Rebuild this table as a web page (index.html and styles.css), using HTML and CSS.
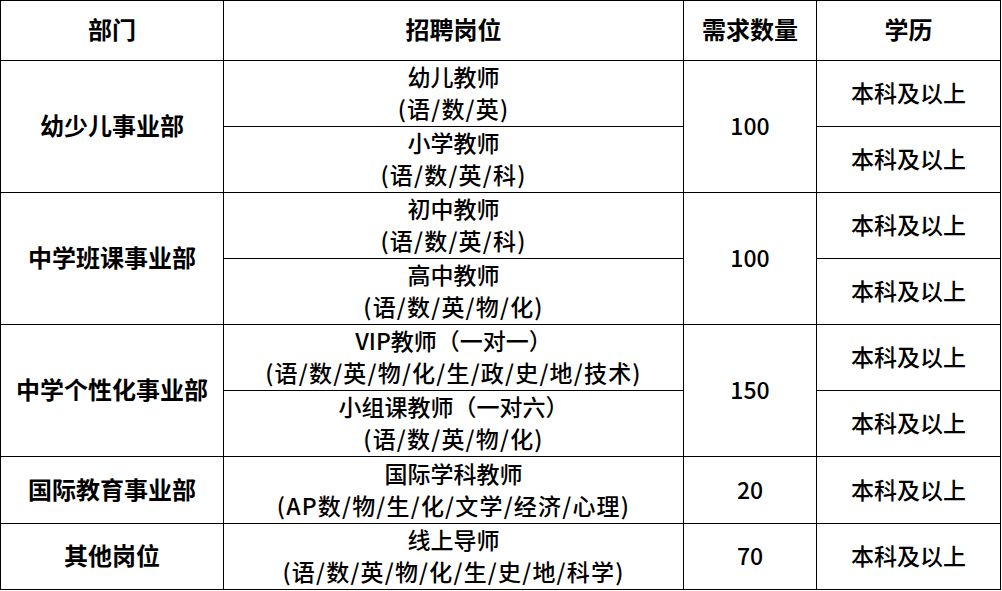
FILE: index.html
```html
<!DOCTYPE html>
<html lang="zh-CN">
<head>
<meta charset="utf-8">
<title>招聘岗位</title>
<link rel="stylesheet" href="styles.css">
</head>
<body>
<div class="table">
  <div class="cell head">部门</div>
  <div class="cell head">招聘岗位</div>
  <div class="cell head">需求数量</div>
  <div class="cell head">学历</div>

  <div class="cell dept span2">幼少儿事业部</div>
  <div class="cell pos"><span>幼儿教师</span><span class="sub">(语/数/英)</span></div>
  <div class="cell num span2">100</div>
  <div class="cell edu">本科及以上</div>
  <div class="cell pos"><span>小学教师</span><span class="sub">(语/数/英/科)</span></div>
  <div class="cell edu">本科及以上</div>

  <div class="cell dept span2">中学班课事业部</div>
  <div class="cell pos"><span>初中教师</span><span class="sub">(语/数/英/科)</span></div>
  <div class="cell num span2">100</div>
  <div class="cell edu">本科及以上</div>
  <div class="cell pos"><span>高中教师</span><span class="sub">(语/数/英/物/化)</span></div>
  <div class="cell edu">本科及以上</div>

  <div class="cell dept span2">中学个性化事业部</div>
  <div class="cell pos"><span>VIP教师（一对一）</span><span class="sub">(语/数/英/物/化/生/政/史/地/技术)</span></div>
  <div class="cell num span2">150</div>
  <div class="cell edu">本科及以上</div>
  <div class="cell pos"><span>小组课教师（一对六）</span><span class="sub">(语/数/英/物/化)</span></div>
  <div class="cell edu">本科及以上</div>

  <div class="cell dept">国际教育事业部</div>
  <div class="cell pos"><span>国际学科教师</span><span class="sub">(AP数/物/生/化/文学/经济/心理)</span></div>
  <div class="cell num">20</div>
  <div class="cell edu">本科及以上</div>

  <div class="cell dept">其他岗位</div>
  <div class="cell pos"><span>线上导师</span><span class="sub">(语/数/英/物/化/生/史/地/科学)</span></div>
  <div class="cell num">70</div>
  <div class="cell edu">本科及以上</div>
</div>
</body>
</html>
```

FILE: styles.css
```css
html, body {
  margin: 0;
  padding: 0;
  background: #ffffff;
}

.table {
  display: grid;
  width: 1001px;
  grid-template-columns: 222px 459px 132px 183px;
  grid-template-rows: 59px 65px 65px 65px 65px 65px 65px 66px 65px;
  gap: 1px;
  padding: 1px;
  box-sizing: border-box;
  background: #000000;
  font-family: "Noto Sans CJK SC", "Microsoft YaHei", sans-serif;
  color: #000000;
}

.cell {
  background: #ffffff;
  display: flex;
  align-items: center;
  justify-content: center;
  text-align: center;
  font-size: 23px;
  font-weight: 500;
  line-height: 32px;
  padding-bottom: 3px;
  box-sizing: border-box;
  white-space: nowrap;
}

.pos {
  flex-direction: column;
}

.sub {
  letter-spacing: 1.2px;
}

.head,
.dept {
  font-weight: 700;
  font-size: 24px;
}

.span2 {
  grid-row: span 2;
}
```
